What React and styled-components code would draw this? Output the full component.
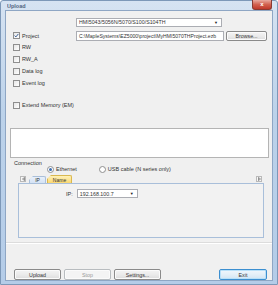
import React from 'react';
import styled, { createGlobalStyle } from 'styled-components';

const Global = createGlobalStyle`
	html, body {
		margin: 0;
		padding: 0;
		background: #ffffff;
	}
	body {
		font-family: "Liberation Sans", Arial, sans-serif;
		font-size: 5.5px;
		color: #2b2b2b;
	}
`;

const Frame = styled.div`
	width: 278px;
	height: 285px;
	box-sizing: border-box;
	display: flex;
	flex-direction: column;
	padding: 0 4px 3px 4px;
	background: linear-gradient(180deg, #d6e3f2 0%, #bcd2ea 40%, #b4cce8 100%);
	border: 1px solid #7d98b8;
	border-radius: 3px 3px 0 0;
`;

const TitleBar = styled.div`
	height: 11px;
	display: flex;
	align-items: center;
	justify-content: space-between;
	padding-left: 2px;
`;

const Title = styled.span`
	color: #1d3557;
	font-size: 5.5px;
	font-weight: bold;
	opacity: 0.75;
`;

const Close = styled.div`
	width: 18px;
	height: 9px;
	margin-top: -2px;
	margin-right: 1px;
	border: 1px solid #8a3a32;
	border-top: none;
	border-radius: 0 0 3px 3px;
	background: linear-gradient(180deg, #e8a99f 0%, #d2614f 50%, #c0392b 100%);
	color: #fff;
	font-size: 6px;
	font-weight: bold;
	display: flex;
	align-items: center;
	justify-content: center;
`;

const Client = styled.div`
	flex: 1;
	display: flex;
	flex-direction: column;
	background: #f0f0f0;
	border: 1px solid #8ea6c4;
	padding: 5px 3px 0 4px;
`;

const Row = styled.div`
	display: flex;
	align-items: center;
	height: ${p => p.$h || 12}px;
	margin-top: ${p => p.$mt || 0}px;
	padding-left: ${p => p.$pl || 0}px;
`;

const LeftCell = styled.div`
	width: ${p => (p.$auto ? 'auto' : '66px')};
	padding-left: 3px;
	box-sizing: border-box;
	display: flex;
	align-items: center;
`;

const Check = styled.span`
	width: 5px;
	height: 5px;
	border: 1px solid #8f8f8f;
	background: linear-gradient(135deg, #e6e6e6, #ffffff);
	margin-right: 2px;
	display: inline-flex;
	align-items: center;
	justify-content: center;
`;

const Label = styled.span`
	white-space: nowrap;
	font-size: ${p => p.$fs || 5.5}px;
	color: #333;
`;

const Field = styled.div`
	width: ${p => p.$w}px;
	height: ${p => p.$h || 9}px;
	box-sizing: border-box;
	border: 1px solid #abadb3;
	background: #fff;
	display: flex;
	align-items: center;
	justify-content: space-between;
	padding: 0 2px 0 2px;
	font-size: ${p => p.$fs || 5.3}px;
	white-space: nowrap;
	overflow: hidden;
	color: #333;
`;

const Arrow = styled.span`
	font-size: 4px;
	color: #222;
	margin-right: 1px;
`;

const Button = styled.div`
	width: ${p => p.$w}px;
	height: ${p => p.$h || 11}px;
	box-sizing: border-box;
	border: 1px solid ${p => (p.$disabled ? '#b8bcbf' : p.$default ? '#3c8fd0' : '#8a8a8a')};
	border-radius: 2px;
	background: ${p =>
		p.$disabled
			? '#f4f4f4'
			: p.$default
			? 'linear-gradient(180deg, #f0f7fc 0%, #e3eff8 50%, #d2e5f3 100%)'
			: 'linear-gradient(180deg, #f4f4f4 0%, #ebebeb 50%, #dcdcdc 100%)'};
	box-shadow: inset 0 0 0 1px ${p => (p.$default ? '#b8e0f8' : '#fbfbfb')};
	color: ${p => (p.$disabled ? '#9a9a9a' : '#333')};
	font-size: 5.3px;
	display: flex;
	align-items: center;
	justify-content: center;
	margin-left: ${p => p.$ml || 0}px;
`;

const Output = styled.div`
	height: 30px;
	margin-top: 17px;
	background: #fff;
	border: 1px solid #b4b4b4;
	box-sizing: border-box;
`;

const Radio = styled.span`
	width: 5px;
	height: 5px;
	border-radius: 50%;
	border: 1px solid #8f8f8f;
	background: #fff;
	margin-right: 2px;
	margin-left: ${p => p.$ml || 0}px;
	display: inline-flex;
	align-items: center;
	justify-content: center;
	&::after {
		content: '';
		width: 3px;
		height: 3px;
		border-radius: 50%;
		background: ${p => (p.$on ? '#3f6fb0' : 'transparent')};
	}
`;

const TabStrip = styled.div`
	display: flex;
	align-items: flex-end;
	height: 9px;
	margin-top: 2px;
	padding: 0 7px 0 10px;
`;

const ScrollBtn = styled.div`
	width: 6px;
	height: 6px;
	box-sizing: border-box;
	border: 1px solid #b9b9b9;
	background: #f7f7f7;
	display: flex;
	align-items: center;
	justify-content: center;
	margin-bottom: 1px;
	margin-left: ${p => (p.$right ? 'auto' : 0)};
`;

const Tab = styled.div`
	height: ${p => (p.$active ? 8 : 7)}px;
	width: ${p => p.$w}px;
	box-sizing: border-box;
	margin-left: ${p => p.$ml || 0}px;
	border: 1px solid ${p => (p.$active ? '#d9b84f' : '#aabfd9')};
	border-bottom: none;
	border-radius: 3px 2px 0 0;
	clip-path: polygon(4px 0, 100% 0, 100% 100%, 0 100%, 0 4px);
	background: ${p => (p.$active ? 'linear-gradient(180deg, #fff1b8, #fbd871)' : 'linear-gradient(180deg, #e8f0fb, #d4e2f4)')};
	font-size: 5px;
	display: flex;
	align-items: center;
	justify-content: center;
	color: #333;
`;

const TabPanel = styled.div`
	height: 55px;
	margin: 0 5px 0 8px;
	box-sizing: border-box;
	border: 1px solid #a9bfda;
	background: #f2f2f2;
	display: flex;
	align-items: flex-start;
	padding: 5px 0 0 47px;
`;

const IpRow = styled.div`
	display: flex;
	align-items: center;
	gap: 4px;
`;

const Separator = styled.div`
	height: 1px;
	margin: 4px -3px 0 -4px;
	background: #dcdcdc;
	border-bottom: 1px solid #fff;
`;

const ButtonBar = styled.div`
	display: flex;
	align-items: center;
	margin-top: 25px;
	padding: 0 2px 0 4px;
`;

const Spacer = styled.div`
	flex: 1;
`;

const Tri = ({ dir }) => (
	<svg width="3" height="4" viewBox="0 0 3 4">
		<path
			d={dir === 'left' ? 'M2.5 0.5 L0.5 2 L2.5 3.5 Z' : 'M0.5 0.5 L2.5 2 L0.5 3.5 Z'}
			fill="none"
			stroke="#666"
			strokeWidth="0.7"
		/>
	</svg>
);

const Tick = () => (
	<svg width="5" height="5" viewBox="0 0 5 5">
		<path d="M0.6 2.6 L1.9 3.9 L4.4 0.9" fill="none" stroke="#3b5f95" strokeWidth="1" />
	</svg>
);

const checks = ['RW', 'RW_A', 'Data log', 'Event log'];

export default function App() {
	return (
		<>
			<Global />
			<Frame>
				<TitleBar>
					<Title>Upload</Title>
					<Close>x</Close>
				</TitleBar>
				<Client>
					<Row $h={10} $mt={1}>
						<LeftCell />
						<Field $w={146}>
							<span>HMI5043/5056N/5070/S100/S104TH</span>
							<Arrow>▼</Arrow>
						</Field>
					</Row>
					<Row $h={11} $mt={3}>
						<LeftCell>
							<Check><Tick /></Check>
							<Label>Project</Label>
						</LeftCell>
						<Field $w={148} $h={10} $fs={5.1}>
							<span>C:\MapleSystems\EZ5000\project\MyHMI5070THProject.ezb</span>
						</Field>
						<Button $w={41} $h={10} $ml={2}>Browse...</Button>
					</Row>
					{checks.map(c => (
						<Row key={c} $h={12}>
							<LeftCell>
								<Check />
								<Label>{c}</Label>
							</LeftCell>
						</Row>
					))}
					<Row $h={12} $mt={10}>
						<LeftCell $auto>
							<Check />
							<Label>Extend Memory (EM)</Label>
						</LeftCell>
					</Row>
					<Output />
					<Row $h={6} $mt={2} $pl={4}>
						<Label>Connection</Label>
					</Row>
					<Row $h={6} $pl={37}>
						<Radio $on />
						<Label>Ethernet</Label>
						<Radio $ml={22} />
						<Label>USB cable (N series only)</Label>
					</Row>
					<TabStrip>
						<ScrollBtn><Tri dir="left" /></ScrollBtn>
						<Tab $w={17} $ml={3}>IP</Tab>
						<Tab $w={25} $ml={1} $active>Name</Tab>
						<ScrollBtn $right><Tri dir="right" /></ScrollBtn>
					</TabStrip>
					<TabPanel>
						<IpRow>
							<Label>IP:</Label>
							<Field $w={61}>
								<span>192.168.100.7</span>
								<Arrow>▼</Arrow>
							</Field>
						</IpRow>
					</TabPanel>
					<Separator />
					<ButtonBar>
						<Button $w={47}>Upload</Button>
						<Button $w={47} $ml={3} $disabled>Stop</Button>
						<Button $w={47} $ml={3}>Settings...</Button>
						<Spacer />
						<Button $w={48} $default>Exit</Button>
					</ButtonBar>
				</Client>
			</Frame>
		</>
	);
}
